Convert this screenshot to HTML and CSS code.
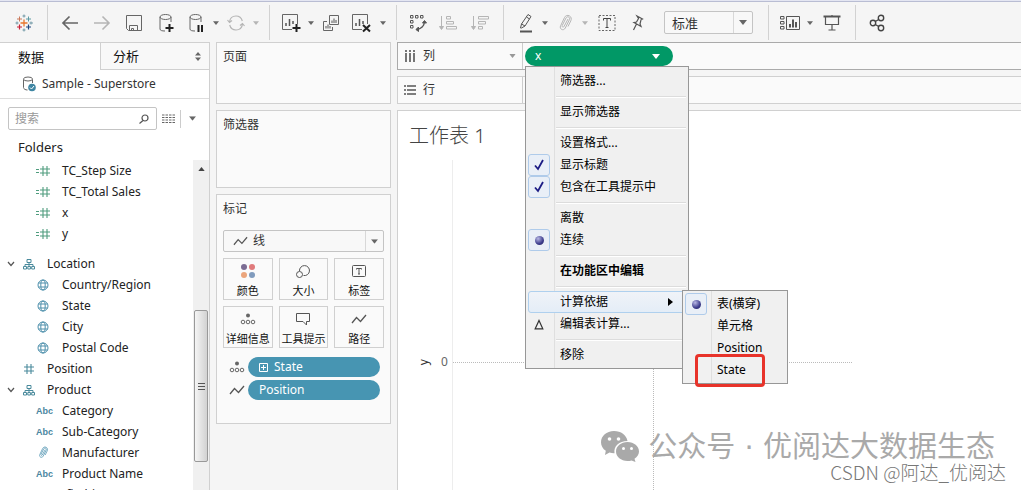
FILE: index.html
```html
<!DOCTYPE html>
<html lang="zh-CN">
<head>
<meta charset="utf-8">
<title>工作表 1</title>
<link rel="stylesheet" href="styles.css">
</head>
<body>
<svg class="defs" aria-hidden="true">
  <symbol id="caret" viewBox="0 0 8 5"><path d="M0 0h8L4 5z" fill="currentColor"/></symbol>
  <symbol id="calc" viewBox="0 0 14 12"><path d="M0 4.500h3M0 7.500h3M4 4h10M4 8h10M7 1v10M11 1v10" fill="none" stroke="#4f9c7e" stroke-width="1.100"/></symbol>
  <symbol id="hash" viewBox="0 0 12 12"><path d="M1 4h10M1 8h10M4 1v10M8 1v10" fill="none" stroke="#4a8a9c" stroke-width="1.100"/></symbol>
  <symbol id="globe" viewBox="0 0 12 12"><g fill="none" stroke="#4e90ac"><circle cx="6" cy="6" r="5"/><ellipse cx="6" cy="6" rx="2.200" ry="5"/><path d="M1.500 4h9M1.500 8h9"/></g></symbol>
  <symbol id="tree" viewBox="0 0 12 12"><path d="M4 1.500h4v3H4zM.5 8.500h3v2.500h-3zM4.800 8.500h2.600v2.500H4.800zM8.700 8.500h2.800v2.500H8.700zM6 4.500v4M2 8.500v-2h8v2" fill="none" stroke="#4a8a9c"/></symbol>
  <symbol id="chev" viewBox="0 0 8 6"><path d="M1 1l3 3.500L7 1" fill="none" stroke="#555" stroke-width="1.200"/></symbol>
  <symbol id="clip" viewBox="0 0 16 18"><path d="M11 5L7 12.500c-.6 1.200-2.400.4-1.800-.9L9 4c1.200-2.400 4.600-.9 3.400 1.700L8.300 14c-1.700 3.400-6.300 1.200-4.700-2.200L7.500 3.500c1-2 3-2.600 4.800-1.700 2 1 2.400 3 1.500 5L11 12.500" fill="none" stroke="currentColor"/></symbol>
  <symbol id="line" viewBox="0 0 16 10"><path d="M1 9l4.500-5.500 4 4L15 1" fill="none" stroke="#555" stroke-width="1.300"/></symbol>
  <symbol id="detail" viewBox="0 0 16 12"><circle cx="8" cy="2.500" r="2" fill="#666"/><g fill="none" stroke="#666"><circle cx="3" cy="9" r="1.800"/><circle cx="8" cy="9" r="1.800"/><circle cx="13" cy="9" r="1.800"/></g></symbol>
  <symbol id="db" viewBox="0 0 18 20"><path d="M14 9V4M3 4v12c0 1.500 2 2 5 2M3 8" fill="none" stroke="currentColor"/><ellipse cx="8.500" cy="4" rx="5.500" ry="2.500" fill="none" stroke="currentColor"/></symbol>
</svg>

<header class="toolbar">
  <button class="logo" aria-label="Tableau"><svg width="18" height="18" viewBox="0 0 18 18" fill="none"><path d="M9 5.500v7M5.500 9h7" stroke="#e8762d" stroke-width="1.300"/><path d="M4.500 2.500v5M2 5h5" stroke="#c9785b"/><path d="M13.500 2.500v5M11 5h5" stroke="#5c9aa3"/><path d="M4.500 10.500v5M2 13h5" stroke="#c72037" stroke-width="1.200"/><path d="M13.500 10.500v5M11 13h5" stroke="#1f457e" stroke-width="1.200"/><path d="M9 .5v3M7.500 2h3M9 14.500v3M7.500 16h3M16 7.500v3M14.500 9H18M2 7.500v3M.5 9h3" stroke="#7199a6"/></svg></button>
  <span class="rule"></span>
  <div class="tools">
    <button class="tool wide" aria-label="撤消"><svg width="18" height="16" viewBox="0 0 18 16"><path d="M17 8H2M8.500 1.500L2 8l6.500 6.500" fill="none" stroke="#666" stroke-width="1.700"/></svg></button>
    <button class="tool wide" aria-label="重做"><svg width="18" height="16" viewBox="0 0 18 16"><path d="M1 8h15M9.500 1.500L16 8l-6.500 6.500" fill="none" stroke="#b5b5b5" stroke-width="1.600"/></svg></button>
    <button class="tool wide" aria-label="保存"><svg width="18" height="18" viewBox="0 0 18 18"><path d="M1.500 1.500h15v15h-13l-2-2zM4.500 16.500v-5h8v5M6.500 16.500v-2h2v2" fill="none" stroke="#666"/></svg></button>
    <button class="tool wide" aria-label="新建数据源"><svg width="18" height="20" viewBox="0 0 18 20"><use href="#db"/><path d="M12.500 11v8M8.500 15h8" stroke="#222" stroke-width="2"/></svg></button>
    <button class="tool" aria-label="暂停自动更新"><svg width="18" height="20" viewBox="0 0 18 20"><use href="#db"/><path d="M11.500 12v7M15 12v7" stroke="#222" stroke-width="2"/></svg></button>
    <button class="drop" aria-label="更新选项"><svg width="6" height="4"><use href="#caret"/></svg></button>
    <button class="tool off" aria-label="刷新"><svg width="18" height="18" viewBox="0 0 18 18" fill="none" stroke="#b5b5b5" stroke-width="1.200"><path d="M2.500 8C3 4 6 2 9 2c3 0 5.500 2 6.300 5M15.500 10c-.5 4-3.500 6-6.500 6-3 0-5.500-2-6.300-5M.5 6l2 2.500L5 6.500M17.500 12l-2-2.500L13 11.500"/></svg></button>
    <button class="drop off" aria-label="刷新选项"><svg width="6" height="4"><use href="#caret"/></svg></button>
  </div>
  <span class="rule"></span>
  <div class="tools">
    <button class="tool" aria-label="新建工作表"><svg width="20" height="20" viewBox="0 0 20 20"><path d="M11 16.500H1.500v-15h15V11" fill="none" stroke="#666"/><path d="M5 13v-3M8.500 13V6M12 11V8" stroke="#555" stroke-width="1.500"/><path d="M15.500 11v8M11.500 15h8" stroke="#222" stroke-width="2"/></svg></button>
    <button class="drop" aria-label="新建选项"><svg width="6" height="4"><use href="#caret"/></svg></button>
    <button class="tool" aria-label="复制"><svg width="18" height="18" viewBox="0 0 18 18"><path d="M7.500 1.500h9v9h-9zM5 7.500H1.500v9h9V13" fill="none" stroke="#666"/><path d="M10 9V6.500M12 9V4.500M14 9V6M4 14.500V12M6 14.500v-4M8 14.500V12" stroke="#555"/></svg></button>
    <button class="tool wide" aria-label="清除工作表"><svg width="20" height="20" viewBox="0 0 20 20"><path d="M11 16.500H1.500v-15h15V11" fill="none" stroke="#666"/><path d="M5 13v-3M8.500 13V6M12 11V8" stroke="#555" stroke-width="1.500"/><path d="M12 12l7 6.500M19 12l-7 6.500" stroke="#222" stroke-width="2"/></svg></button>
    <button class="drop" aria-label="清除选项"><svg width="6" height="4"><use href="#caret"/></svg></button>
  </div>
  <span class="rule"></span>
  <div class="tools">
    <button class="tool" aria-label="交换行和列"><svg width="18" height="18" viewBox="0 0 18 18" fill="none" stroke="#555"><path d="M1.500 1.500h2.500v2.500H1.500zM6.500 1.500H9v2.500H6.500zM11.500 1.500H14v2.500h-2.500zM1.500 6.500H4V9H1.500zM1.500 11.500H4V14H1.500z"/><path d="M15.500 7c0 5-3.500 8-8 8.500" stroke-width="1.300"/><path d="M13.500 9l2-2.500 2 2.500zM9.500 13L7 15.500 9.500 17.500z" fill="#555"/></svg></button>
    <button class="tool wide" aria-label="升序排序"><svg width="18" height="18" viewBox="0 0 18 18" fill="none" stroke="#b5b5b5"><path d="M2.500 2v13M.5 12.500l2 3 2-3z" fill="#b5b5b5"/><path d="M7.500 2.500h4V5h-4zM7.500 7.500h7V10h-7zM7.500 12.500h10V15h-10z"/></svg></button>
    <button class="tool wide" aria-label="降序排序"><svg width="18" height="18" viewBox="0 0 18 18" fill="none" stroke="#b5b5b5"><path d="M2.500 2v13M.5 12.500l2 3 2-3z" fill="#b5b5b5"/><path d="M7.500 2.500h10V5h-10zM7.500 7.500h7V10h-7zM7.500 12.500h4V15h-4z"/></svg></button>
  </div>
  <span class="rule"></span>
  <div class="tools">
    <button class="tool" aria-label="突出显示"><svg width="16" height="20" viewBox="0 0 16 20"><path d="M3.500 15l1-4L11 1.500l3 2L8 13l-3.500 2zM4.500 11l3.500 2M9.500 4l3 2" fill="none" stroke="#555"/><path d="M3 18.500h12" stroke="#555" stroke-width="2"/></svg></button>
    <button class="drop" aria-label="突出显示选项"><svg width="6" height="4"><use href="#caret"/></svg></button>
    <button class="tool off" aria-label="分组成员"><svg width="16" height="18"><use href="#clip"/></svg></button>
    <button class="drop off" aria-label="分组选项"><svg width="6" height="4"><use href="#caret"/></svg></button>
    <button class="tool wide" aria-label="显示标记标签"><svg width="18" height="18" viewBox="0 0 18 18" fill="none" stroke="#666"><path d="M1 1.500h16v15H1z" stroke-dasharray="2 1.500"/><path d="M5.500 6.500v-2h7v2M9 4.500v9M7.500 13.500h3" stroke="#444"/></svg></button>
    <button class="tool" aria-label="固定轴"><svg width="16" height="18" viewBox="0 0 16 18"><path d="M8 2l5.500 3-1.500.8-1 4.200 1 2.500-7-4L7.500 8l2-3.500zM7.500 10L4.500 16" fill="none" stroke="#555" stroke-width="1.200"/></svg></button>
  </div>
  <div class="select fit">
    <select aria-label="适合"><option>标准</option></select>
    <svg width="8" height="5"><use href="#caret"/></svg>
  </div>
  <span class="rule"></span>
  <div class="tools">
    <button class="tool" aria-label="显示卡"><svg width="20" height="16" viewBox="0 0 20 16" fill="none" stroke="#555"><path d="M6.500 1.500h13v13h-13zM.5 1.500H4V4H.5zM.5 6.500H4V9H.5zM.5 11.500H4V14H.5z"/><path d="M10 12.500V9M13 12.500v-8M16 12.500V7" stroke-width="2"/></svg></button>
    <button class="drop" aria-label="卡选项"><svg width="6" height="4"><use href="#caret"/></svg></button>
    <button class="tool wide" aria-label="演示模式"><svg width="18" height="18" viewBox="0 0 18 18" fill="none" stroke="#555"><path d="M.5 2.500h17" stroke-width="2"/><path d="M2.500 2.500v8h13v-8M9 1v1M9 10.500v5M5.500 16h7" stroke-width="1.200"/></svg></button>
  </div>
  <span class="rule"></span>
  <div class="tools">
    <button class="tool" aria-label="共享"><svg width="16" height="18" viewBox="0 0 16 18" fill="none" stroke="#444" stroke-width="1.400"><circle cx="4" cy="9" r="2.700"/><circle cx="12" cy="4" r="2.700"/><circle cx="12" cy="14" r="2.700"/><path d="M6.300 7.500l3.400-2M6.300 10.500l3.400 2"/></svg></button>
  </div>
</header>

<main class="workspace">
  <aside class="data-pane">
    <div class="tabs">
      <button class="tab active">数据</button>
      <button class="tab">分析<svg width="6" height="9" viewBox="0 0 6 9"><path d="M0 3.500L3 0l3 3.500zM0 5.500L3 9l3-3.500z" fill="#666"/></svg></button>
    </div>
    <a class="source" href="#source"><svg width="14" height="16" viewBox="0 0 14 16"><path d="M1.500 3.500v8c0 1.500 2 2.500 4 2.500M10.500 3.500V7" fill="none" stroke="#666"/><ellipse cx="6" cy="3" rx="4.500" ry="2" fill="none" stroke="#666"/><circle cx="10" cy="11.500" r="3.800" fill="#3f86a3"/><path d="M8 11.500l1.500 1.500 2.500-3" fill="none" stroke="#fff"/></svg>Sample - Superstore</a>
    <div class="search-row">
      <div class="search">
        <input type="search" aria-label="搜索" placeholder="搜索">
        <svg width="10" height="10" viewBox="0 0 10 10" fill="none" stroke="#555" stroke-width="1.200"><circle cx="6" cy="4" r="3"/><path d="M4 6.500L.5 9.500"/></svg>
      </div>
      <button class="plain" aria-label="视图"><svg width="13" height="10" viewBox="0 0 13 10"><path d="M0 1h13M0 3.500h13M0 6h13M0 8.500h13" stroke="#666" stroke-dasharray="2.500 1"/></svg></button>
      <button class="plain split" aria-label="菜单"><svg width="7" height="5" viewBox="0 0 8 5"><use href="#caret"/></svg></button>
    </div>
    <h2>Folders</h2>
    <div class="fields">
      <ul class="field-list">
        <li class="leaf"><svg width="14" height="12"><use href="#calc"/></svg>TC_Step Size</li>
        <li class="leaf"><svg width="14" height="12"><use href="#calc"/></svg>TC_Total Sales</li>
        <li class="leaf"><svg width="14" height="12"><use href="#calc"/></svg>x</li>
        <li class="leaf"><svg width="14" height="12"><use href="#calc"/></svg>y</li>
        <li class="branch spaced"><svg class="chev" width="8" height="6"><use href="#chev"/></svg><svg width="12" height="12"><use href="#tree"/></svg>Location</li>
        <li class="leaf"><svg width="12" height="12"><use href="#globe"/></svg>Country/Region</li>
        <li class="leaf"><svg width="12" height="12"><use href="#globe"/></svg>State</li>
        <li class="leaf"><svg width="12" height="12"><use href="#globe"/></svg>City</li>
        <li class="leaf"><svg width="12" height="12"><use href="#globe"/></svg>Postal Code</li>
        <li class="branch"><span class="chev"></span><svg width="12" height="12"><use href="#hash"/></svg>Position</li>
        <li class="branch"><svg class="chev" width="8" height="6"><use href="#chev"/></svg><svg width="12" height="12"><use href="#tree"/></svg>Product</li>
        <li class="leaf"><span class="abc">Abc</span>Category</li>
        <li class="leaf"><span class="abc">Abc</span>Sub-Category</li>
        <li class="leaf"><svg class="blue" width="12" height="13"><use href="#clip"/></svg>Manufacturer</li>
        <li class="leaf"><span class="abc">Abc</span>Product Name</li>
        <li class="branch"><span class="chev"></span><svg width="12" height="12"><use href="#hash"/></svg>Profit (bin)</li>
      </ul>
      <div class="scrollbar">
        <svg class="up" width="7" height="4" viewBox="0 0 8 5"><path d="M0 5h8L4 0z" fill="#444"/></svg>
        <div class="thumb"><i></i><i></i><i></i></div>
      </div>
    </div>
  </aside>

  <section class="cards">
    <div class="card pages"><h3>页面</h3></div>
    <div class="card filters"><h3>筛选器</h3></div>
    <div class="card marks">
      <h3>标记</h3>
      <div class="select mark-type">
        <svg class="lead" width="15" height="10"><use href="#line"/></svg>
        <select aria-label="标记类型"><option>线</option></select>
        <svg width="7" height="5" viewBox="0 0 8 5"><use href="#caret"/></svg>
      </div>
      <div class="mark-grid">
        <button><svg width="16" height="16" viewBox="0 0 16 16"><circle cx="4" cy="4" r="3" fill="#7b6c93"/><circle cx="12" cy="4" r="3" fill="#e07a7c"/><circle cx="4" cy="12" r="3" fill="#eba57c"/><circle cx="12" cy="12" r="3" fill="#809bbd"/></svg>颜色</button>
        <button><svg width="16" height="16" viewBox="0 0 16 16" fill="none" stroke="#555"><path d="M4.500 8a5 5 0 1 1 4 4.500"/><circle cx="4.500" cy="11.500" r="3"/></svg>大小</button>
        <button><svg width="16" height="16" viewBox="0 0 16 16" fill="none" stroke="#555"><rect x="1.500" y="2.500" width="13" height="11" rx="1"/><path d="M5.500 6.500v-1h5v1M8 5.500V11M7 11h2"/></svg>标签</button>
        <button><svg width="16" height="16" viewBox="0 -2 16 16"><use href="#detail" width="16" height="12"/></svg>详细信息</button>
        <button><svg width="16" height="16" viewBox="0 0 16 16"><path d="M1.500 2.500h13v8h-3V14L8 10.500H1.500z" fill="none" stroke="#555"/></svg>工具提示</button>
        <button><svg width="16" height="16" viewBox="0 -3 16 16"><use href="#line" width="16" height="10"/></svg>路径</button>
      </div>
      <div class="encoding"><svg width="16" height="12"><use href="#detail"/></svg><button class="pill blue-pill"><svg width="9" height="9" viewBox="0 0 9 9"><path d="M.5.5h8v8h-8zM4.500 2v5M2 4.500h5" fill="none" stroke="#fff"/></svg>State</button></div>
      <div class="encoding"><svg width="16" height="10"><use href="#line"/></svg><button class="pill blue-pill">Position</button></div>
    </div>
  </section>

  <section class="view">
    <div class="shelf columns">
      <div class="shelf-name"><svg width="12" height="12" viewBox="0 0 12 12"><path d="M2 0v2M6 0v2M10 0v2M2 3v9M6 3v9M10 3v9" stroke="#555" stroke-width="1.600"/></svg>列<svg class="end" width="7" height="4" viewBox="0 0 8 5"><use href="#caret"/></svg></div>
      <div class="anchor">
        <button class="pill green-pill">x<svg width="8" height="5"><use href="#caret"/></svg></button>
        <ul class="menu" role="menu">
          <li><button role="menuitem">筛选器...</button></li>
          <li class="sep"></li>
          <li><button role="menuitem">显示筛选器</button></li>
          <li class="sep"></li>
          <li><button role="menuitem">设置格式...</button></li>
          <li><button role="menuitemcheckbox" aria-checked="true"><span class="mark on"><svg width="10" height="12" viewBox="0 0 10 12"><path d="M1 6.500l3 3.500L9 1" fill="none" stroke="#1c1c84" stroke-width="1.800"/></svg></span>显示标题</button></li>
          <li><button role="menuitemcheckbox" aria-checked="true"><span class="mark on"><svg width="10" height="12" viewBox="0 0 10 12"><path d="M1 6.500l3 3.500L9 1" fill="none" stroke="#1c1c84" stroke-width="1.800"/></svg></span>包含在工具提示中</button></li>
          <li class="sep"></li>
          <li><button role="menuitemradio" aria-checked="false">离散</button></li>
          <li><button role="menuitemradio" aria-checked="true"><span class="mark on"><span class="dot"></span></span>连续</button></li>
          <li class="sep"></li>
          <li><button role="menuitem" class="strong">在功能区中编辑</button></li>
          <li class="sep"></li>
          <li class="open"><button role="menuitem" aria-haspopup="true">计算依据<svg class="arrow" width="5" height="8" viewBox="0 0 5 8"><path d="M0 0l5 4-5 4z"/></svg></button>
            <ul class="menu submenu" role="menu">
              <li><button role="menuitemradio" aria-checked="true"><span class="mark on"><span class="dot"></span></span>表(横穿)</button></li>
              <li><button role="menuitemradio">单元格</button></li>
              <li><button role="menuitemradio">Position</button></li>
              <li class="callout"><button role="menuitemradio">State</button></li>
            </ul>
          </li>
          <li><button role="menuitem"><span class="mark"><svg width="10" height="11" viewBox="0 0 10 11"><path d="M1.200 9.800L5 1.500l3.800 8.300z" fill="none" stroke="#333" stroke-width="1.200"/></svg></span>编辑表计算...</button></li>
          <li class="sep"></li>
          <li><button role="menuitem">移除</button></li>
        </ul>
      </div>
    </div>
    <div class="shelf rows">
      <div class="shelf-name"><svg width="12" height="12" viewBox="0 0 12 12"><path d="M0 2h2M0 6h2M0 10h2M3 2h9M3 6h9M3 10h9" stroke="#555" stroke-width="1.600"/></svg>行</div>
    </div>
    <div class="sheet">
      <h1>工作表 1</h1>
      <div class="chart">
        <div class="axis"><span class="axis-title">y</span><span>0</span></div>
        <div class="plot"><span class="zero-x"></span><span class="zero-y"></span></div>
      </div>
    </div>
    <div class="watermark">
      <p class="account"><svg width="40" height="34" viewBox="0 0 40 34"><path d="M14 1C6.500 1 1 6 1 12.200c0 3.600 1.800 6.500 4.800 8.600L5 25l4.500-2.400c1.800.5 3.500.8 5 .7C13.500 16 19 11 27.500 11 26.500 5 21 1 14 1z" fill="#a9a9a9"/><path d="M27.500 12C21 12 16 16.300 16 21.500S21 31 27.500 31c1.500 0 2.800-.2 4-.6L35.500 32l-1-3.200c2.800-1.900 4.500-4.400 4.500-7.300C39 16.300 34 12 27.500 12z" fill="#a9a9a9"/><g fill="#fff"><circle cx="9.500" cy="9" r="1.800"/><circle cx="18.500" cy="9" r="1.800"/><circle cx="23.500" cy="18.500" r="1.500"/><circle cx="31.500" cy="18.500" r="1.500"/></g></svg>公众号 · 优阅达大数据生态</p>
      <p class="csdn">CSDN @阿达_优阅达</p>
    </div>
  </section>
</main>
</body>
</html>
```
FILE: styles.css
```css
*,
*::after {
  box-sizing: border-box;
}

body {
  margin: 0;
  height: 100vh;
  display: flex;
  flex-direction: column;
  overflow: hidden;
  background: #f5f5f5;
  color: #222;
  font: 12px/20px "Noto Sans", "Noto Sans CJK SC", sans-serif;
}

button,
input,
select {
  font: inherit;
  color: inherit;
  background: none;
  border: 0;
  padding: 0;
  margin: 0;
}

h1,
h2,
h3,
p,
ul {
  margin: 0;
  padding: 0;
  font-weight: normal;
  list-style: none;
}

svg {
  display: block;
  flex: none;
}

.defs {
  position: absolute;
  width: 0;
  height: 0;
}

/* Toolbar */
.toolbar {
  display: flex;
  flex: none;
  height: 42px;
  padding-top: 2px;
  border-top: 1px solid #e4e6f2;
  box-shadow: inset 0 1px #b9bdd3;
  align-items: center;
}

.logo {
  width: 47px;
  display: flex;
  justify-content: center;
}

.rule {
  width: 1px;
  height: 35px;
  margin: 0 7px;
  background: #d2d2d2;
}

.logo + .rule {
  margin: 0 6px 0 0;
}

.tools {
  display: flex;
}

.tool,
.drop {
  width: 28px;
  height: 28px;
  display: flex;
  align-items: center;
  justify-content: center;
  color: #666;
}

.tool.wide {
  width: 32px;
}

.drop {
  width: 12px;
}

.tool.off,
.drop.off {
  color: #b5b5b5;
}

.select {
  display: flex;
  align-items: center;
  border: 1px solid #c4c4c4;
  border-radius: 2px;
  background: #f8f8f8;
  color: #666;
}

.select select {
  flex: 1;
  height: 100%;
  min-width: 0;
  appearance: none;
  color: #333;
  border-right: 1px solid #d8d8d8;
}

.select > svg:last-child {
  margin: 0 5px;
}

.fit {
  width: 89px;
  height: 23px;
  margin: 0 8px 0 13px;
}

.fit select {
  padding-left: 7px;
  font-size: 13px;
}

/* Layout */
.workspace {
  flex: 1;
  min-height: 0;
  display: flex;
  gap: 6px;
}

.data-pane {
  flex: none;
  width: 210px;
  display: flex;
  flex-direction: column;
  background: #fff;
  border-top: 1px solid #d0d0d0;
  border-right: 1px solid #d0d0d0;
}

.tabs {
  display: flex;
  height: 27px;
}

.tab {
  flex: 1;
  display: flex;
  align-items: center;
  justify-content: space-between;
  padding: 0 8px 0 12px;
  background: #f8f8f8;
  border: solid #d0d0d0;
  border-width: 0 0 1px 1px;
  font-size: 13px;
  color: #111;
}

.tab.active {
  flex: none;
  width: 100px;
  padding-left: 18px;
  background: #fff;
  border: 0;
}

.source {
  display: flex;
  align-items: center;
  gap: 6px;
  height: 29px;
  padding-left: 22px;
  border-bottom: 1px solid #ddd;
  color: #333;
  text-decoration: none;
}

.search-row {
  display: flex;
  align-items: center;
  padding: 8px 0 0 8px;
}

.search {
  display: flex;
  align-items: center;
  width: 149px;
  height: 23px;
  padding: 0 7px 0 6px;
  border: 1px solid #c4c4c4;
  border-radius: 2px;
}

.search input {
  flex: 1;
  min-width: 0;
  outline: 0;
}

.search input::placeholder {
  color: #999;
}

.plain {
  height: 18px;
  padding: 0 5px;
  color: #666;
}

.plain.split {
  padding: 0 8px;
  border-left: 1px solid #ccc;
}

.data-pane h2 {
  padding: 7px 0 3px 18px;
  font-size: 13px;
}

.fields {
  flex: 1;
  min-height: 0;
  display: flex;
}

.field-list {
  flex: 1;
  overflow: hidden;
}

.field-list li {
  display: flex;
  align-items: center;
  height: 21px;
  color: #222;
}

.field-list li.spaced {
  margin-top: 9px;
}

.leaf > :first-child {
  width: 14px;
  margin: 0 12px 0 36px;
}

.branch > .chev {
  width: 8px;
  margin: 0 8px 0 7px;
}

.branch > :nth-child(2) {
  margin-right: 12px;
}

.leaf .abc {
  font: bold 9px/20px "Liberation Sans", sans-serif;
  color: #4a86a0;
  white-space: nowrap;
}

.blue {
  color: #4a8fae;
}

.scrollbar {
  width: 16px;
  background: #f0f0f0;
  display: flex;
  flex-direction: column;
  align-items: center;
}

.up {
  margin-top: 7px;
}

.thumb {
  width: 14px;
  height: 152px;
  margin-top: 139px;
  display: flex;
  flex-direction: column;
  align-items: center;
  justify-content: center;
  gap: 2px;
  border: 1px solid #999;
  border-radius: 2px;
  background: linear-gradient(90deg, #f5f5f5, #d2d2d2);
}

.thumb i {
  width: 7px;
  height: 1px;
  background: #555;
}

/* Cards */
.cards {
  flex: none;
  width: 175px;
  display: flex;
  flex-direction: column;
  gap: 6px;
}

.card {
  padding: 4px 6px;
  border: 1px solid #d0d0d0;
  background: #fafafa;
}

.pages {
  height: 62px;
}

.filters {
  height: 78px;
}

.marks {
  height: 230px;
}

.card h3 {
  font-size: 12px;
  color: #333;
}

.mark-type {
  height: 22px;
  margin: 11px 0 6px;
}

.mark-type .lead {
  margin: 0 5px 0 9px;
}

.mark-grid {
  display: grid;
  grid-template-columns: repeat(3, 1fr);
  gap: 6px;
  margin-bottom: 9px;
}

.mark-grid button {
  display: flex;
  flex-direction: column;
  align-items: center;
  justify-content: space-between;
  height: 42px;
  padding-top: 4px;
  border: 1px solid #d0d0d0;
  font-size: 11px;
  line-height: 16px;
  white-space: nowrap;
  color: #111;
}

.encoding {
  display: flex;
  align-items: center;
  gap: 3px;
  padding: 0 4px 0 6px;
  margin-bottom: 3px;
}

.pill {
  display: flex;
  align-items: center;
  height: 20px;
  border-radius: 10px;
  color: #fff;
}

.blue-pill {
  flex: 1;
  gap: 6px;
  padding: 0 11px;
  background: #4795b2;
}

/* Shelves and sheet */
.view {
  position: relative;
  flex: 1;
  min-width: 0;
  display: flex;
  flex-direction: column;
  gap: 6px;
}

.shelf {
  display: flex;
  height: 28px;
  border: 1px solid #d0d0d0;
  border-right: 0;
  background: #fafafa;
}

.columns {
  border-color: #aaa;
}

.shelf-name {
  display: flex;
  align-items: center;
  gap: 7px;
  width: 125px;
  padding: 0 6px;
  border-right: 1px solid #ccc;
  color: #333;
}

.shelf-name .end {
  margin-left: auto;
  color: #999;
}

.anchor {
  position: relative;
  padding: 3px 2px;
}

.green-pill {
  width: 148px;
  justify-content: space-between;
  padding: 0 13px 0 10px;
  background: #019866;
}

.sheet {
  flex: 1;
  min-height: 0;
  overflow: hidden;
  padding: 10px 0 0 11px;
  background: #fff;
  border: solid #d0d0d0;
  border-width: 1px 0 0 1px;
}

.sheet h1 {
  font: 300 20px/30px "Noto Sans", "Noto Sans CJK SC", sans-serif;
  color: #444;
}

.chart {
  display: flex;
  height: 404px;
  margin-top: 9px;
}

.axis {
  display: flex;
  align-items: center;
  gap: 11px;
  width: 43px;
  padding-left: 9px;
  color: #666;
}

.axis-title {
  writing-mode: vertical-rl;
  transform: rotate(180deg);
  line-height: 12px;
  color: #333;
}

.plot {
  position: relative;
  width: 400px;
  border-left: 1px solid #ededed;
}

.zero-x,
.zero-y {
  position: absolute;
}

.zero-x {
  top: 50%;
  width: 100%;
  border-top: 1px dotted #bbb;
}

.zero-y {
  left: 50%;
  height: 100%;
  border-left: 1px dotted #bbb;
}

/* Context menu */
.menu {
  position: absolute;
  z-index: 2;
  top: 23px;
  left: 2px;
  width: 164px;
  padding: 3px 2px 2px;
  border: 1px solid #979797;
  background: linear-gradient(90deg, #f1f1f1 28px, #dfdfdf 28px, #dfdfdf 29px, #f0f0f0 29px);
}

.menu li {
  position: relative;
}

.menu button {
  display: flex;
  align-items: center;
  width: 100%;
  height: 22px;
  padding-left: 32px;
  color: #000;
  white-space: nowrap;
}

.menu .sep {
  height: 2px;
  margin: 4px 0 3px 28px;
  border-top: 1px solid #dcdcdc;
  background: #fff;
}

.menu .strong {
  font-weight: bold;
}

.mark {
  display: flex;
  align-items: center;
  justify-content: center;
  width: 22px;
  height: 22px;
  margin: 0 10px 0 -32px;
  border: 1px solid transparent;
  border-radius: 3px;
}

.mark.on {
  border-color: #afcbea;
  background: #e9eff7;
}

.dot {
  width: 9px;
  height: 9px;
  border-radius: 50%;
  background: radial-gradient(circle at 35% 30%, #b8b8e4, #3c3c8c 60%, #26265c);
}

.open > button {
  border: 1px solid #afd0ee;
  border-radius: 3px;
  background: linear-gradient(#f0f3f8, #e4edf7);
  padding-left: 31px;
}

.arrow {
  margin: 0 12px 0 auto;
}

.submenu {
  top: -1px;
  left: 154px;
  width: 106px;
  padding: 2px;
}

.callout::after {
  content: "";
  position: absolute;
  top: -5px;
  left: 10px;
  width: 70px;
  height: 33px;
  border: 3px solid #e8332a;
  border-radius: 4px;
}

/* Watermark */
.watermark {
  position: absolute;
  right: 15px;
  bottom: 8px;
  color: #a9a9a9;
  text-align: right;
  white-space: nowrap;
}

.account {
  display: flex;
  align-items: center;
  justify-content: flex-end;
  gap: 8px;
  height: 30px;
  margin-right: 11px;
  font: 29px/30px "DejaVu Sans", "Noto Sans CJK SC", sans-serif;
}

.csdn {
  font: 300 19px/20px "Noto Sans CJK SC", sans-serif;
  color: #777;
}
```
